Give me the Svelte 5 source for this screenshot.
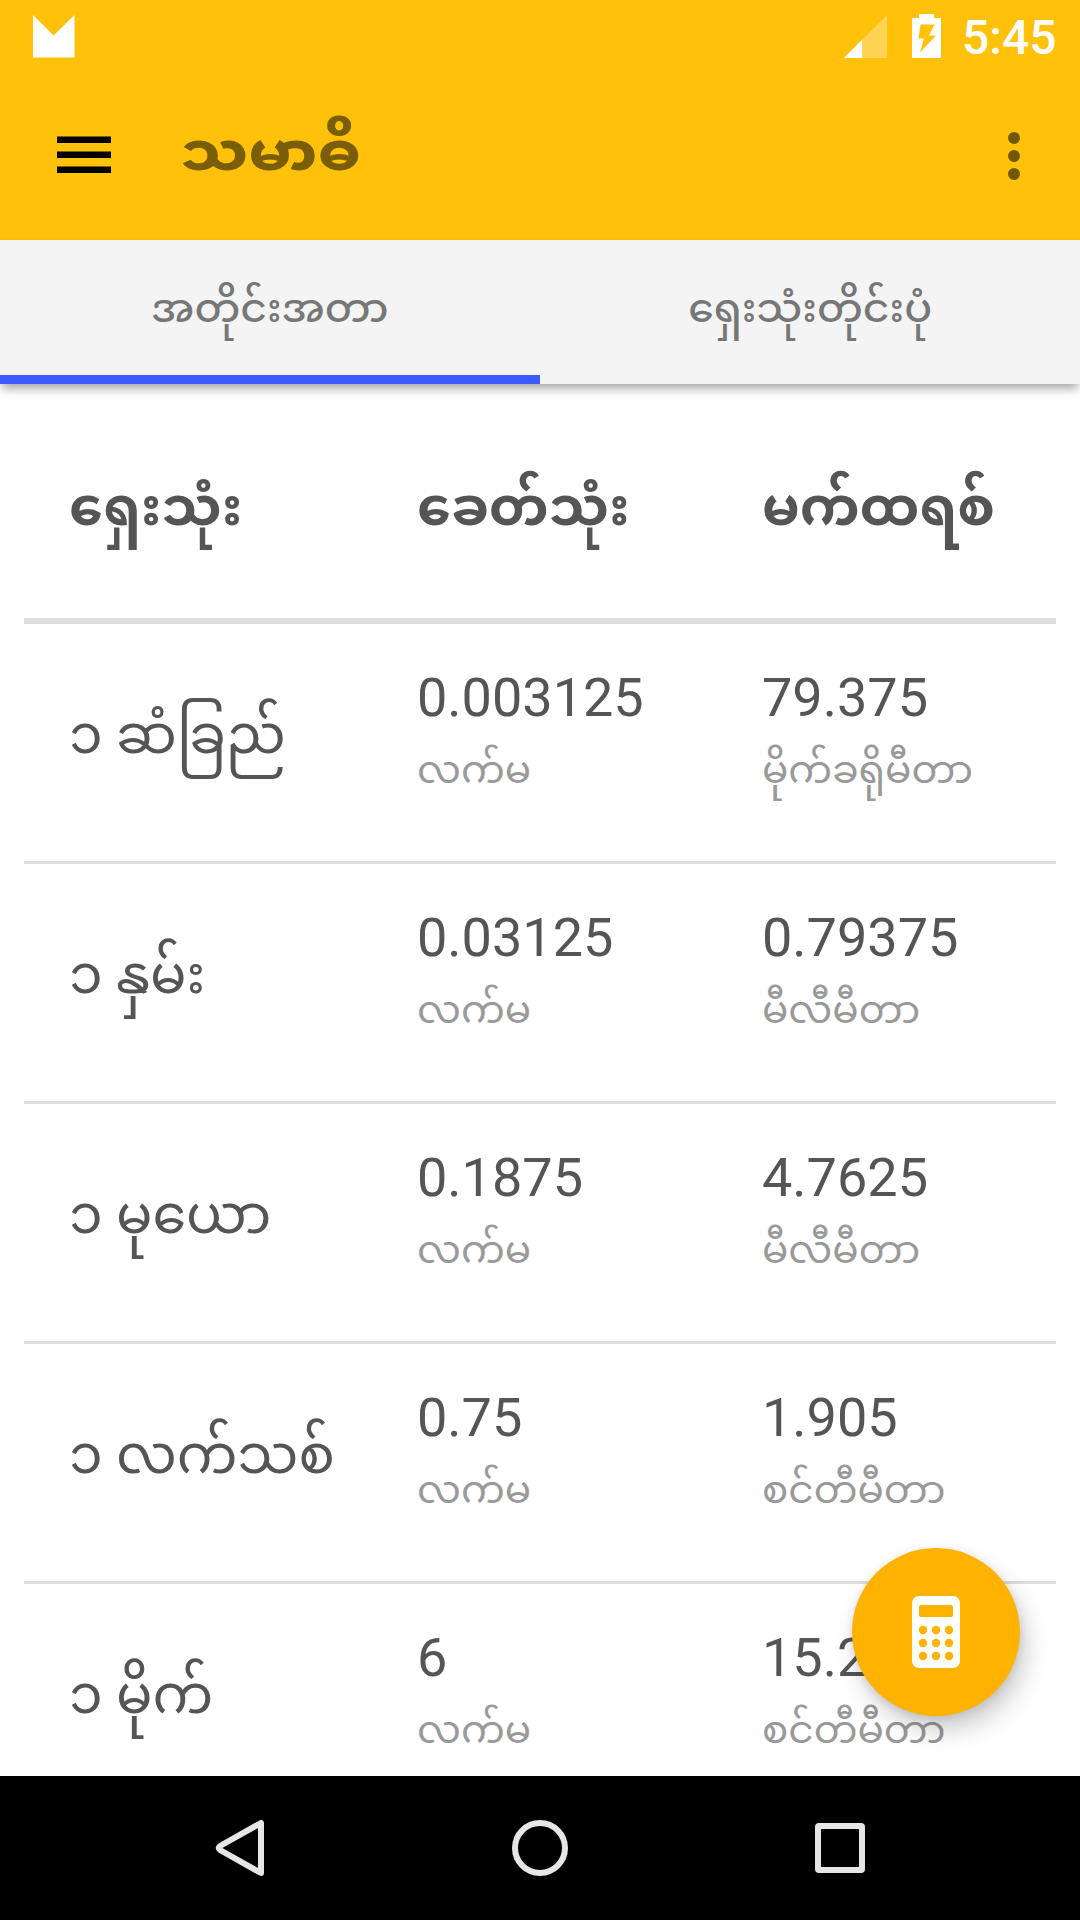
<script lang="ts">
  const tabs = ['အတိုင်းအတာ', 'ရှေးသုံးတိုင်းပုံ'];
  let active = $state(0);

  const headers = ['ရှေးသုံး', 'ခေတ်သုံး', 'မက်ထရစ်'];

  const rows = [
    { name: '၁ ဆံခြည်', modern: '0.003125', modernUnit: 'လက်မ', metric: '79.375', metricUnit: 'မိုက်ခရိုမီတာ' },
    { name: '၁ နှမ်း', modern: '0.03125', modernUnit: 'လက်မ', metric: '0.79375', metricUnit: 'မီလီမီတာ' },
    { name: '၁ မုယော', modern: '0.1875', modernUnit: 'လက်မ', metric: '4.7625', metricUnit: 'မီလီမီတာ' },
    { name: '၁ လက်သစ်', modern: '0.75', modernUnit: 'လက်မ', metric: '1.905', metricUnit: 'စင်တီမီတာ' },
    { name: '၁ မိုက်', modern: '6', modernUnit: 'လက်မ', metric: '15.24', metricUnit: 'စင်တီမီတာ' }
  ];
</script>

<div class="screen">
  <header class="top">
    <div class="status-bar">
      <svg class="notify" width="43" height="43" viewBox="0 0 43 43"><path d="M1 0l20.500 20.500L42.500 0v42.500H1z" fill="#fff" /></svg>
      <svg class="signal" width="43" height="43" viewBox="0 0 43 43">
        <path d="M43 0v43H0z" fill="#fff" opacity="0.3" />
        <path d="M18 25v18H0z" fill="#fff" />
      </svg>
      <svg class="battery" width="29" height="44" viewBox="0 0 29 44">
        <path fill="#fff" fill-rule="evenodd" d="M7 0h15v4h7v40H0V4h7zM8.500 10.500L6.500 24.500h5.500L8 38.500l16-17h-7l5.500-11z" />
      </svg>
      <span class="time">5:45</span>
    </div>
    <div class="app-bar">
      <button class="icon-btn" aria-label="Menu">
        <svg width="54" height="38" viewBox="0 0 54 38">
          <path d="M0 0.500h54v6.500H0zM0 15.500h54v6.500H0zM0 30.500h54v6.500H0z" />
        </svg>
      </button>
      <h1>သမာဓိ</h1>
      <button class="icon-btn more" aria-label="More">
        <svg width="12" height="48" viewBox="0 0 12 48" fill="#725806">
          <circle cx="6" cy="6" r="6" />
          <circle cx="6" cy="24" r="6" />
          <circle cx="6" cy="42" r="6" />
        </svg>
      </button>
    </div>
  </header>

  <nav class="tabs">
    {#each tabs as tab, i}
      <button class="tab" class:active={active === i} onclick={() => (active = i)}>
        <span class="label">{tab}</span>
      </button>
    {/each}
  </nav>

  <main class="content">
    <div class="row head">
      {#each headers as header}
        <div class="name">{header}</div>
      {/each}
    </div>
    {#each rows as row}
      <div class="row">
        <div class="name">{row.name}</div>
        <div class="cell">
          <div class="value">{row.modern}</div>
          <div class="unit">{row.modernUnit}</div>
        </div>
        <div class="cell">
          <div class="value">{row.metric}</div>
          <div class="unit">{row.metricUnit}</div>
        </div>
      </div>
    {/each}
    <button class="fab" aria-label="Calculator">
      <svg width="48" height="72" viewBox="0 0 48 72">
        <rect width="48" height="72" rx="7" fill="#fff" />
        <rect x="7" y="9" width="34" height="12" rx="2" fill="#ffb300" />
        {#each [34, 47, 60] as cy}
          {#each [11, 24, 37] as cx}
            <circle {cx} {cy} r="4.200" fill="#ffb300" />
          {/each}
        {/each}
      </svg>
    </button>
  </main>

  <footer class="nav-bar">
    <svg width="60" height="60" viewBox="0 0 60 60"><path d="M51 5v50L10 32q-2.500-2 0-4z" /></svg>
    <svg width="60" height="60" viewBox="0 0 60 60"><circle cx="30" cy="30" r="25" /></svg>
    <svg width="60" height="60" viewBox="0 0 60 60"><rect x="8" y="8" width="44" height="44" rx="1" /></svg>
  </footer>
</div>

<style>
  :global(body) {
    margin: 0;
  }

  .screen {
    display: flex;
    flex-direction: column;
    width: 1080px;
    height: 1920px;
    overflow: hidden;
    background: #fff;
    font-family: Roboto, 'Noto Sans Myanmar', 'Padauk', 'Noto Sans', sans-serif;
    color: #555;
  }

  button {
    border: 0;
    padding: 0;
    background: none;
    font: inherit;
  }

  svg {
    display: block;
  }

  .top {
    height: 240px;
    background: #ffc10a;
  }

  .status-bar {
    display: flex;
    align-items: center;
    height: 72px;
    padding: 0 26px 0 32px;
    color: #fff;
  }

  .signal {
    margin-left: auto;
    margin-right: 25px;
  }

  .battery {
    margin-right: 21px;
  }

  .time {
    font-size: 48px;
    font-weight: 500;
    line-height: 72px;
    padding-top: 4px;
    width: 92px;
  }

  .app-bar {
    display: flex;
    align-items: center;
    height: 168px;
    padding: 0 60px 0 57px;
    box-sizing: border-box;
  }

  .icon-btn {
    padding-bottom: 2px;
  }

  h1 {
    margin: 0 0 0 69px;
    padding-bottom: 8px;
    font-size: 54px;
    line-height: 80px;
    font-weight: 800;
    color: #7a5d07;
    transform: scaleX(1.13);
    transform-origin: left;
  }

  .more {
    margin-left: auto;
    padding: 0;
  }

  .tabs {
    display: flex;
    height: 144px;
    background: #f4f4f4;
    box-shadow: 0 6px 10px -2px rgba(0, 0, 0, 0.38);
    z-index: 1;
  }

  .tab {
    flex: 1;
    box-sizing: border-box;
    padding-top: 3px;
    border-bottom: 9px solid transparent;
    font-size: 39px;
    font-weight: 500;
    line-height: 131px;
    color: #777;
  }

  .tab.active {
    border-bottom-color: #3d5afe;
  }

  .label {
    display: inline-block;
    transform: scaleX(1.05);
  }

  .content {
    position: relative;
    height: 1392px;
    padding: 0 24px;
    overflow: hidden;
  }

  .row {
    display: grid;
    grid-template-columns: 348px 345px 1fr;
    box-sizing: border-box;
    height: 240px;
    padding-left: 45px;
    border-bottom: 3px solid #ddd;
    font-size: 54px;
    line-height: 64px;
    white-space: nowrap;
  }

  .name {
    padding-top: 79px;
  }

  .head {
    border-bottom-width: 6px;
    font-weight: 700;
  }

  .head .name {
    padding-top: 91px;
  }

  .cell {
    padding-top: 42px;
  }

  .unit {
    margin-top: 8px;
    font-size: 39px;
    color: #999;
  }

  .fab {
    position: absolute;
    right: 60px;
    bottom: 60px;
    display: flex;
    align-items: center;
    justify-content: center;
    width: 168px;
    height: 168px;
    border-radius: 50%;
    background: #ffb300;
    box-shadow: 6px 14px 24px rgba(0, 0, 0, 0.2), 0 2px 8px rgba(0, 0, 0, 0.1);
  }

  .nav-bar {
    display: flex;
    align-items: center;
    justify-content: center;
    gap: 240px;
    height: 144px;
    background: #000;
  }

  .nav-bar svg {
    fill: none;
    stroke: #e6e6e6;
    stroke-width: 6;
    stroke-linejoin: round;
  }
</style>
